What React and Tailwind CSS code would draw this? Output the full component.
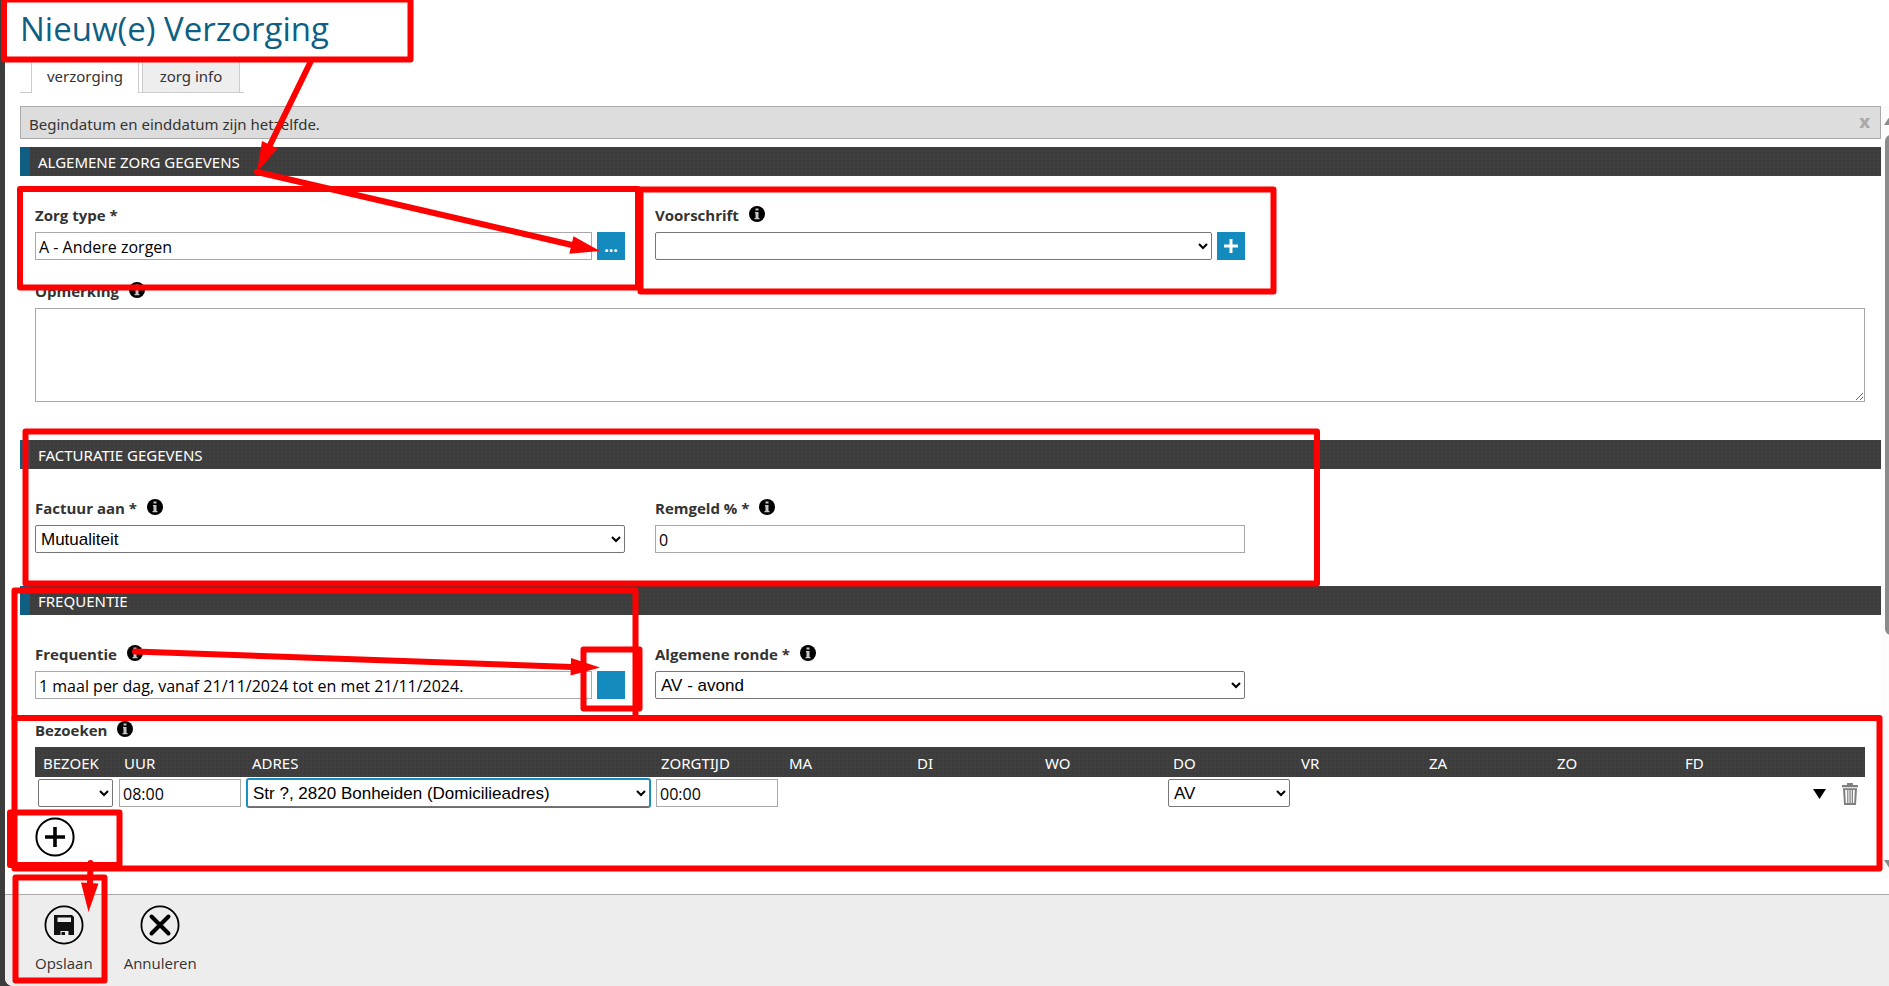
import React, { useState } from 'react';

const TEXTURE = 'bg-[#3f3f3f] bg-[radial-gradient(#3b3b3b_1px,transparent_1px)] bg-[length:4px_4px]';
const INPUT = 'h-7 w-full min-w-0 border border-[#a9a9a9] bg-white px-[3px] pt-0.5 text-base text-black outline-none';
const SELECT = "h-7 w-full min-w-0 rounded-xs border border-[#767676] bg-white px-px font-['Liberation_Sans',sans-serif] text-[17px] text-black outline-none";

const DAYS = ['MA', 'DI', 'WO', 'DO', 'VR', 'ZA', 'ZO', 'FD'];

const InfoIcon = () => (
  <svg viewBox="0 0 16 16" className="h-4 w-4 shrink-0" aria-hidden="true">
    <circle cx="8" cy="8" r="8" fill="#000" />
    <path d="M6.5 2.5h3v2h-3zM6 6h3.5v6h1v1.3h-5V12h1V7.2H6z" fill="#c8c8c8" />
  </svg>
);

const FieldLabel = ({ htmlFor, children, info }) => (
  <div className="mb-1.5 flex h-6 items-center gap-2.5">
    <label htmlFor={htmlFor} className="pt-0.5 text-[15px] leading-6 font-bold text-[#333]">{children}</label>
    {info && <InfoIcon />}
  </div>
);

const Section = ({ title, children }) => (
  <section>
    <h2 className={`flex h-[29px] items-center border-l-10 border-[#0e5f83] pt-px pl-2 font-['Noto_Sans',sans-serif] text-[15px] text-white ${TEXTURE}`}>
      {title}
    </h2>
    <div className="pt-[26px] pr-4 pb-[33px] pl-[15px]">{children}</div>
  </section>
);

const BlueButton = ({ label, children }) => (
  <button type="button" aria-label={label} className="flex h-7 w-7 shrink-0 items-center justify-center bg-[#148bbe] text-base font-bold text-white">
    {children}
  </button>
);

const PlusCircle = () => (
  <svg viewBox="0 0 40 40" className="h-10 w-10" fill="none" stroke="#000">
    <circle cx="20" cy="20" r="18.6" strokeWidth="2" />
    <path d="M20 10v20M10 20h20" strokeWidth="3.6" />
  </svg>
);

const SaveCircle = () => (
  <svg viewBox="0 0 40 40" className="h-10 w-10">
    <circle cx="20" cy="20" r="18.6" fill="none" stroke="#000" strokeWidth="1.8" />
    <path fillRule="evenodd" d="M10 10h18l2 2v18h-3v-6H14v6h-4zM13.5 12.5V17h13.5v-4.5z" fill="#111" />
    <path fillRule="evenodd" d="M13 23h14v7h-2.5v-4h-8v4H13z" fill="#111" />
    <path d="M17.5 27h3.5v3h-3.5z" fill="#111" />
  </svg>
);

const CancelCircle = () => (
  <svg viewBox="0 0 40 40" className="h-10 w-10" fill="none" stroke="#000">
    <circle cx="20" cy="20" r="18.6" strokeWidth="1.8" />
    <path d="M11.5 11.5l17 17M28.5 11.5l-17 17" strokeWidth="4" strokeLinecap="round" />
  </svg>
);

const TrashIcon = () => (
  <svg viewBox="0 0 18 24" className="h-6 w-[18px]" fill="#808080">
    <path d="M6 1h6v2h5v2.2H1V3h5z" />
    <path fillRule="evenodd" d="M2 6.2h14l-1 16.8H3zM4.2 8l.6 13h1.4V8zM7.4 8v13h1V8zM9.7 8v13h1V8zM12 8v13h1.2l.6-13z" />
  </svg>
);

// Red walkthrough marks drawn over the form
const Annotations = () => (
  <svg
    className="pointer-events-none absolute top-0 left-0 h-[986px] w-[1889px]"
    viewBox="0 0 1889 986"
    fill="none"
    stroke="#f00"
    strokeWidth="6"
    strokeLinejoin="round"
    strokeLinecap="round"
    aria-hidden="true"
  >
    <rect x="4" y="-0.5" width="406.5" height="60" />
    <rect x="20" y="189" width="618" height="98.5" />
    <rect x="640.5" y="189.5" width="633" height="102" />
    <rect x="25.5" y="431.5" width="1291.5" height="152" />
    <rect x="14.5" y="590.5" width="621" height="127.5" />
    <rect x="583.5" y="649.5" width="56" height="59" />
    <rect x="14.5" y="718" width="1865" height="150.5" />
    <rect x="10" y="812.5" width="109.5" height="52.5" />
    <rect x="15.5" y="877.5" width="89" height="103" />
    <path d="M311 61L270 145M257 172L572 245M135 651.5L572 667M90.5 863L90 884" />
    <g fill="#f00" stroke="none">
      <path d="M257 172L262 141L277.5 148.5z" />
      <path d="M600 251L573.5 236.3L569.3 253.7z" />
      <path d="M600 667.5L571 658L570.5 675.5z" />
      <path d="M88.5 912L81 882.5L98.5 883.5z" />
    </g>
  </svg>
);

const App = () => {
  const [zorgType, setZorgType] = useState('A - Andere zorgen');
  const [opmerking, setOpmerking] = useState('');
  const [remgeld, setRemgeld] = useState('0');
  const [frequentie, setFrequentie] = useState('1 maal per dag, vanaf 21/11/2024 tot en met 21/11/2024.');
  const [uur, setUur] = useState('08:00');
  const [zorgtijd, setZorgtijd] = useState('00:00');

  return (
    <div className="relative flex min-h-screen overflow-hidden bg-[#3c3c3c] pl-[5px] font-['Open_Sans',sans-serif] text-[#333]">
      <div className="flex min-w-0 flex-1 flex-col overflow-hidden rounded-bl-lg bg-white">
        <header className="h-[60px] px-[15px]">
          <h1 className="text-[33px] leading-[58px] text-[#0e5f83]">Nieuw(e) Verzorging</h1>
        </header>

        <nav className="ml-[15px] flex h-[33px] font-['Noto_Sans',sans-serif] text-[15px]">
          <span className="w-[11px] border-b border-[#ccc]" />
          <a href="#verzorging" className="flex w-[108px] items-center justify-center border-x border-[#ccc]">verzorging</a>
          <span className="w-[3px] border-b border-[#ccc]" />
          <a href="#zorg-info" className="flex w-[98px] items-center justify-center border-x border-b border-[#ccc] bg-[#eee]">zorg info</a>
          <span className="w-1 border-b border-[#ccc]" />
        </nav>

        <div className="mt-[13px] flex flex-1">
          <main className="min-w-0 flex-1 pl-[15px]">
            <div role="status" className="mb-2 flex h-[33px] items-center justify-between border border-[#a9a9a9] bg-[#ddd] pr-2.5 pl-2 font-['Noto_Sans',sans-serif] text-[15px]">
              <span className="pt-1">Begindatum en einddatum zijn hetzelfde.</span>
              <button type="button" aria-label="Sluiten" className="pb-1 text-lg leading-6 font-extrabold text-[#a9a9a9]">x</button>
            </div>

            <Section title="ALGEMENE ZORG GEGEVENS">
              <div className="grid grid-cols-3 gap-x-[30px] gap-y-[18px]">
                <div>
                  <FieldLabel htmlFor="zorgtype">Zorg type *</FieldLabel>
                  <div className="flex gap-[5px]">
                    <input id="zorgtype" className={INPUT} value={zorgType} onChange={(e) => setZorgType(e.target.value)} />
                    <BlueButton label="Zorg type kiezen">...</BlueButton>
                  </div>
                </div>
                <div>
                  <FieldLabel htmlFor="voorschrift" info>Voorschrift</FieldLabel>
                  <div className="flex gap-[5px]">
                    <select id="voorschrift" className={SELECT}>
                      <option></option>
                    </select>
                    <BlueButton label="Voorschrift toevoegen">
                      <svg viewBox="0 0 14 14" className="h-3.5 w-3.5" stroke="#fff" strokeWidth="3">
                        <path d="M7 0v14M0 7h14" />
                      </svg>
                    </BlueButton>
                  </div>
                </div>
                <div className="col-span-3 pb-[5px]">
                  <FieldLabel htmlFor="opmerking" info>Opmerking</FieldLabel>
                  <textarea
                    id="opmerking"
                    className="block h-[94px] w-full resize border border-[#a9a9a9] bg-white px-1 text-base outline-none"
                    value={opmerking}
                    onChange={(e) => setOpmerking(e.target.value)}
                  />
                </div>
              </div>
            </Section>

            <Section title="FACTURATIE GEGEVENS">
              <div className="grid grid-cols-3 gap-x-[30px]">
                <div>
                  <FieldLabel htmlFor="factuur" info>Factuur aan *</FieldLabel>
                  <select id="factuur" className={SELECT}>
                    <option>Mutualiteit</option>
                  </select>
                </div>
                <div>
                  <FieldLabel htmlFor="remgeld" info>Remgeld % *</FieldLabel>
                  <input id="remgeld" className={INPUT} value={remgeld} onChange={(e) => setRemgeld(e.target.value)} />
                </div>
              </div>
            </Section>

            <Section title="FREQUENTIE">
              <div className="mb-[18px] grid grid-cols-3 gap-x-[30px]">
                <div>
                  <FieldLabel htmlFor="frequentie" info>Frequentie</FieldLabel>
                  <div className="flex gap-[5px]">
                    <input id="frequentie" className={INPUT} value={frequentie} onChange={(e) => setFrequentie(e.target.value)} />
                    <BlueButton label="Frequentie wijzigen" />
                  </div>
                </div>
                <div>
                  <FieldLabel htmlFor="ronde" info>Algemene ronde *</FieldLabel>
                  <select id="ronde" className={SELECT}>
                    <option>AV - avond</option>
                  </select>
                </div>
              </div>

              <FieldLabel htmlFor="bezoek" info>Bezoeken</FieldLabel>
              <table className="w-full table-fixed border-collapse">
                <thead>
                  <tr className={`h-[30px] text-left font-['Noto_Sans',sans-serif] text-[15px] text-white ${TEXTURE}`}>
                    <th className="w-[81px] pt-0.5 pl-2 font-normal">BEZOEK</th>
                    <th className="w-32 pt-0.5 pl-2 font-normal">UUR</th>
                    <th className="pt-0.5 pl-2 font-normal">ADRES</th>
                    <th className="w-32 pt-0.5 pl-2 font-normal">ZORGTIJD</th>
                    {DAYS.map((day) => (
                      <th key={day} className="w-32 pt-0.5 pl-2 font-normal">{day}</th>
                    ))}
                    <th className="w-[60px]" aria-label="Acties" />
                  </tr>
                </thead>
                <tbody>
                  <tr className="h-8">
                    <td className="px-[3px]">
                      <select id="bezoek" className={SELECT}>
                        <option></option>
                      </select>
                    </td>
                    <td className="px-[3px]">
                      <input aria-label="Uur" className={INPUT} value={uur} onChange={(e) => setUur(e.target.value)} />
                    </td>
                    <td className="px-[3px]">
                      <select aria-label="Adres" className={`${SELECT} ring ring-[#148bbe]`}>
                        <option>Str ?, 2820 Bonheiden (Domicilieadres)</option>
                      </select>
                    </td>
                    <td className="px-[3px]">
                      <input aria-label="Zorgtijd" className={INPUT} value={zorgtijd} onChange={(e) => setZorgtijd(e.target.value)} />
                    </td>
                    {DAYS.map((day) => (
                      <td key={day} className="px-[3px]">
                        {day === 'DO' && (
                          <select aria-label="Ronde donderdag" className={SELECT}>
                            <option>AV</option>
                          </select>
                        )}
                      </td>
                    ))}
                    <td>
                      <div className="flex items-center justify-end gap-[15px] pt-0.5 pr-1.5">
                        <button type="button" aria-label="Meer">
                          <svg viewBox="0 0 13 10" className="h-2.5 w-[13px]">
                            <path d="M0 0h13L6.5 10z" fill="#000" />
                          </svg>
                        </button>
                        <button type="button" aria-label="Verwijderen"><TrashIcon /></button>
                      </div>
                    </td>
                  </tr>
                </tbody>
              </table>
              <button type="button" aria-label="Bezoek toevoegen" className="mt-2 block"><PlusCircle /></button>
            </Section>
          </main>

          {/* scrollbar gutter */}
          <div className="mb-[15px] flex w-2 shrink-0 flex-col overflow-hidden bg-[#fcfcfc] pt-2.5 pb-2.5 pl-[3px]">
            <svg viewBox="0 0 12 9" className="h-[9px] w-3 shrink-0"><path d="M6 0l6 9H0z" fill="#8b8b8b" /></svg>
            <div className="mt-2.5 ml-px flex-1">
              <div className="h-[69%] w-2 rounded-l-md bg-[#8b8b8b]" />
            </div>
            <svg viewBox="0 0 12 9" className="h-[9px] w-3 shrink-0"><path d="M6 9l6-9H0z" fill="#8b8b8b" /></svg>
          </div>
        </div>

        <footer className="flex h-[92px] shrink-0 gap-[31px] border-t border-[#a9a9a9] bg-[#ededed] px-[30px] pt-2.5 text-[15px]">
          <button type="button" className="flex flex-col items-center gap-2">
            <SaveCircle />
            <span className="leading-5">Opslaan</span>
          </button>
          <button type="button" className="flex flex-col items-center gap-2">
            <CancelCircle />
            <span className="leading-5">Annuleren</span>
          </button>
        </footer>
      </div>

      <Annotations />
    </div>
  );
};

export default App;
